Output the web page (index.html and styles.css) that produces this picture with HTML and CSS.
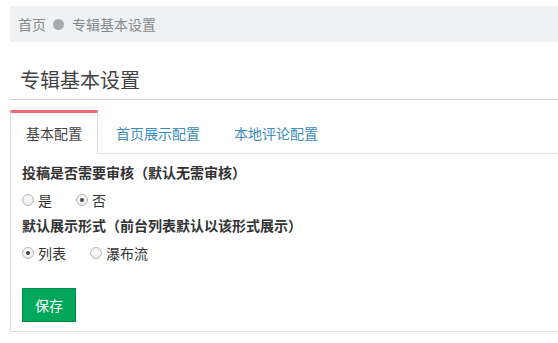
FILE: index.html
```html
<!DOCTYPE html>
<html lang="zh-CN">

<head>
    <meta charset="UTF-8">
    <title>专辑基本设置</title>
    <link rel="stylesheet" href="styles.css">
</head>

<body>
    <div class="page">
        <div class="breadcrumb">
            <a href="#">首页</a>
            <span class="crumb-dot"></span>
            <span>专辑基本设置</span>
        </div>

        <h2 class="page-title">专辑基本设置</h2>

        <ul class="nav-tabs">
            <li class="active"><a href="#">基本配置</a></li>
            <li><a href="#">首页展示配置</a></li>
            <li><a href="#">本地评论配置</a></li>
        </ul>

        <div class="tab-content">
            <div class="form-label">投稿是否需要审核（默认无需审核）</div>
            <div class="radio-row">
                <label class="radio"><span class="radio-box"></span>是</label>
                <label class="radio"><span class="radio-box checked"></span>否</label>
            </div>

            <div class="form-label">默认展示形式（前台列表默认以该形式展示）</div>
            <div class="radio-row">
                <label class="radio"><span class="radio-box checked"></span>列表</label>
                <label class="radio"><span class="radio-box"></span>瀑布流</label>
            </div>

            <button class="btn-save">保存</button>
        </div>
    </div>
</body>

</html>
```

FILE: styles.css
```css
* {
    margin: 0;
    padding: 0;
    box-sizing: border-box;
}

body {
    font-family: "Noto Sans CJK SC", "Liberation Sans", sans-serif;
    font-size: 14px;
    color: #333;
    background: #fff;
}

.page {
    padding: 6px 0 0 10px;
}

.breadcrumb {
    height: 36px;
    background: #eef2f5;
    padding-left: 8px;
    display: flex;
    align-items: center;
    color: #888;
}

.breadcrumb a {
    color: #888;
    text-decoration: none;
}

.crumb-dot {
    width: 11px;
    height: 11px;
    border-radius: 50%;
    background: #aaa;
    margin: 0 8px 0 7px;
}

.page-title {
    margin-top: 24px;
    padding: 0 0 5px 10px;
    font-size: 20px;
    font-weight: normal;
    line-height: 28px;
    color: #444;
    border-bottom: 1px solid #d0d0d0;
}

.nav-tabs {
    list-style: none;
    display: flex;
    margin-top: 10px;
    border-bottom: 1px solid #ddd;
}

.nav-tabs li {
    margin-right: 2px;
    margin-bottom: -1px;
    border: 1px solid transparent;
    border-top-width: 3px;
}

.nav-tabs li a {
    display: block;
    padding: 0 15px;
    line-height: 40px;
    color: #3c8dbc;
    text-decoration: none;
}

.nav-tabs li.active {
    border-color: #ddd;
    border-top-color: #ee6b73;
    border-bottom-color: #fff;
    background: #fff;
}

.nav-tabs li.active a {
    color: #444;
}

.tab-content {
    border-left: 1px solid #ddd;
    border-bottom: 1px solid #ddd;
    padding: 8px 0 9px 11px;
}

.form-label {
    font-weight: bold;
    line-height: 20px;
    color: #333;
}

.radio-row {
    display: flex;
    gap: 24px;
    margin: 8px 0 5px;
    line-height: 20px;
    color: #333;
}

.radio {
    display: flex;
    align-items: center;
}

.radio-box {
    width: 12px;
    height: 12px;
    border-radius: 50%;
    border: 1px solid #b8b8b8;
    background: radial-gradient(circle at 50% 40%, #fff 0%, #e4e4e4 100%);
    margin-right: 4px;
    display: flex;
    align-items: center;
    justify-content: center;
}

.radio-box.checked::after {
    content: "";
    width: 4px;
    height: 4px;
    border-radius: 50%;
    background: #444;
}

.tab-content .radio-row:last-of-type {
    margin-bottom: 25px;
}

.btn-save {
    display: block;
    height: 34px;
    padding: 0 12px;
    font-family: inherit;
    font-size: 14px;
    color: #fff;
    background: #00a65a;
    border: 1px solid #008d4c;
    cursor: pointer;
}
```
